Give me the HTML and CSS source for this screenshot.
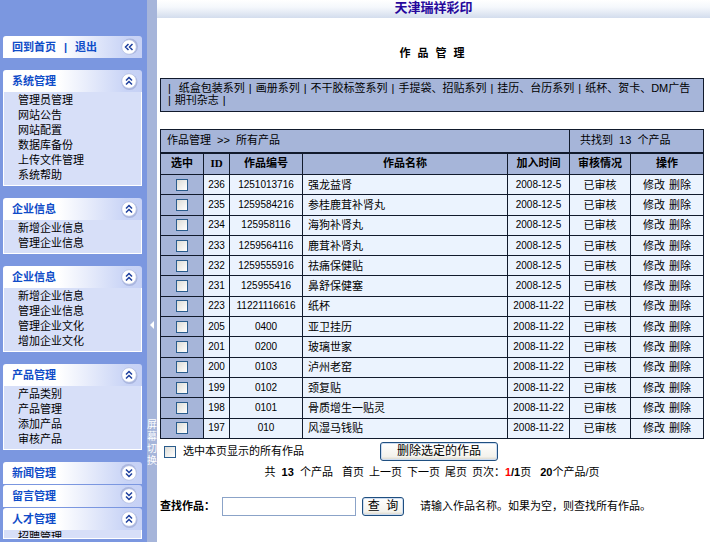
FILE: index.html
```html
<!DOCTYPE html>
<html lang="zh-CN">
<head>
<meta charset="utf-8">
<title>天津瑞祥彩印</title>
<link rel="stylesheet" href="styles.css">
</head>
<body>
<svg class="defs" aria-hidden="true">
  <symbol id="up" viewBox="0 0 18 18">
    <circle cx="9.5" cy="10" r="8" fill="#8f9ccb" opacity=".55"/>
    <circle cx="9" cy="9" r="7.3" fill="#fff" stroke="#b4bfe2" stroke-width=".8"/>
    <path d="M6 8.5 9 5.5 12 8.5M6 12.5 9 9.5 12 12.5" fill="none" stroke="#1d3f9e" stroke-width="1.5"/>
  </symbol>
</svg>
<div class="layout">
  <nav class="sidebar">
    <section class="panel">
      <div class="head"><span class="links"><a href="#">回到首页</a><span>|</span><a href="#">退出</a></span><button class="toggle left" aria-label="收起"><svg><use href="#up"/></svg></button></div>
    </section>
    <section class="panel">
      <div class="head"><h2>系统管理</h2><button class="toggle" aria-label="收起"><svg><use href="#up"/></svg></button></div>
      <ul><li><a href="#">管理员管理</a></li><li><a href="#">网站公告</a></li><li><a href="#">网站配置</a></li><li><a href="#">数据库备份</a></li><li><a href="#">上传文件管理</a></li><li><a href="#">系统帮助</a></li></ul>
    </section>
    <section class="panel">
      <div class="head"><h2>企业信息</h2><button class="toggle" aria-label="收起"><svg><use href="#up"/></svg></button></div>
      <ul><li><a href="#">新增企业信息</a></li><li><a href="#">管理企业信息</a></li></ul>
    </section>
    <section class="panel">
      <div class="head"><h2>企业信息</h2><button class="toggle" aria-label="收起"><svg><use href="#up"/></svg></button></div>
      <ul><li><a href="#">新增企业信息</a></li><li><a href="#">管理企业信息</a></li><li><a href="#">管理企业文化</a></li><li><a href="#">增加企业文化</a></li></ul>
    </section>
    <section class="panel">
      <div class="head"><h2>产品管理</h2><button class="toggle" aria-label="收起"><svg><use href="#up"/></svg></button></div>
      <ul><li><a href="#">产品类别</a></li><li><a href="#">产品管理</a></li><li><a href="#">添加产品</a></li><li><a href="#">审核产品</a></li></ul>
    </section>
    <div class="stack">
      <section class="panel">
        <div class="head"><h2>新闻管理</h2><button class="toggle down" aria-label="展开"><svg><use href="#up"/></svg></button></div>
      </section>
      <section class="panel">
        <div class="head"><h2>留言管理</h2><button class="toggle down" aria-label="展开"><svg><use href="#up"/></svg></button></div>
      </section>
      <section class="panel">
        <div class="head"><h2>人才管理</h2><button class="toggle" aria-label="收起"><svg><use href="#up"/></svg></button></div>
        <ul class="opening"><li><a href="#">招聘管理</a></li></ul>
      </section>
    </div>
  </nav>
  <button class="splitter"><i class="arrow"></i><span>屏幕切换</span></button>
  <main>
    <header class="banner">天津瑞祥彩印</header>
    <div class="content">
      <h1><span>作</span><span>品</span><span>管</span><span>理</span></h1>
      <nav class="series">
        <span>|</span><a class="first" href="#">纸盒包装系列</a><span>|</span><a href="#">画册系列</a><span>|</span><a href="#">不干胶标签系列</a><span>|</span><a href="#">手提袋、招贴系列</a><span>|</span><a href="#">挂历、台历系列</a><span>|</span><a href="#">纸杯、贺卡、DM广告</a><span>|</span><a href="#">期刊杂志</a><span>|</span>
      </nav>
      <table>
        <colgroup><col class="c-check"><col class="c-id"><col class="c-no"><col><col class="c-date"><col class="c-state"><col class="c-act"></colgroup>
        <thead>
          <tr class="summary"><td colspan="5">作品管理 &nbsp;&gt;&gt;&nbsp; 所有产品</td><td colspan="2" class="total">共找到 &nbsp;13&nbsp; 个产品</td></tr>
          <tr><th>选中</th><th class="latin">ID</th><th>作品编号</th><th>作品名称</th><th>加入时间</th><th>审核情况</th><th>操作</th></tr>
        </thead>
        <tbody>
          <tr><td><input type="checkbox" aria-label="236"></td><td>236</td><td>1251013716</td><td>强龙益肾</td><td>2008-12-5</td><td>已审核</td><td><a href="#">修改</a> <a href="#">删除</a></td></tr>
          <tr><td><input type="checkbox" aria-label="235"></td><td>235</td><td>1259584216</td><td>参桂鹿茸补肾丸</td><td>2008-12-5</td><td>已审核</td><td><a href="#">修改</a> <a href="#">删除</a></td></tr>
          <tr><td><input type="checkbox" aria-label="234"></td><td>234</td><td>125958116</td><td>海狗补肾丸</td><td>2008-12-5</td><td>已审核</td><td><a href="#">修改</a> <a href="#">删除</a></td></tr>
          <tr><td><input type="checkbox" aria-label="233"></td><td>233</td><td>1259564116</td><td>鹿茸补肾丸</td><td>2008-12-5</td><td>已审核</td><td><a href="#">修改</a> <a href="#">删除</a></td></tr>
          <tr><td><input type="checkbox" aria-label="232"></td><td>232</td><td>1259555916</td><td>祛痛保健贴</td><td>2008-12-5</td><td>已审核</td><td><a href="#">修改</a> <a href="#">删除</a></td></tr>
          <tr><td><input type="checkbox" aria-label="231"></td><td>231</td><td>125955416</td><td>鼻舒保健塞</td><td>2008-12-5</td><td>已审核</td><td><a href="#">修改</a> <a href="#">删除</a></td></tr>
          <tr><td><input type="checkbox" aria-label="223"></td><td>223</td><td>11221116616</td><td>纸杯</td><td>2008-11-22</td><td>已审核</td><td><a href="#">修改</a> <a href="#">删除</a></td></tr>
          <tr><td><input type="checkbox" aria-label="205"></td><td>205</td><td>0400</td><td>亚卫挂历</td><td>2008-11-22</td><td>已审核</td><td><a href="#">修改</a> <a href="#">删除</a></td></tr>
          <tr><td><input type="checkbox" aria-label="201"></td><td>201</td><td>0200</td><td>玻璃世家</td><td>2008-11-22</td><td>已审核</td><td><a href="#">修改</a> <a href="#">删除</a></td></tr>
          <tr><td><input type="checkbox" aria-label="200"></td><td>200</td><td>0103</td><td>泸州老窑</td><td>2008-11-22</td><td>已审核</td><td><a href="#">修改</a> <a href="#">删除</a></td></tr>
          <tr><td><input type="checkbox" aria-label="199"></td><td>199</td><td>0102</td><td>颈复贴</td><td>2008-11-22</td><td>已审核</td><td><a href="#">修改</a> <a href="#">删除</a></td></tr>
          <tr><td><input type="checkbox" aria-label="198"></td><td>198</td><td>0101</td><td>骨质增生一贴灵</td><td>2008-11-22</td><td>已审核</td><td><a href="#">修改</a> <a href="#">删除</a></td></tr>
          <tr><td><input type="checkbox" aria-label="197"></td><td>197</td><td>010</td><td>风湿马钱贴</td><td>2008-11-22</td><td>已审核</td><td><a href="#">修改</a> <a href="#">删除</a></td></tr>
        </tbody>
      </table>
      <div class="bulk">
        <label><input type="checkbox">选中本页显示的所有作品</label>
        <button class="btn wide">删除选定的作品</button>
      </div>
      <div class="pager">
        <span>共 &nbsp;<b>13</b>&nbsp; 个产品</span>
        <span class="steps"><a href="#">首页</a><a href="#">上一页</a><a href="#">下一页</a><a href="#">尾页</a><span>页次：<b><em>1</em>/1</b>页</span></span>
        <span><b>20</b>个产品/页</span>
      </div>
      <form class="search">
        <label for="q">查找作品：</label>
        <input id="q" type="text">
        <button type="button" class="btn">查&nbsp; 询</button>
        <span>请输入作品名称。如果为空，则查找所有作品。</span>
      </form>
    </div>
  </main>
</div>
</body>
</html>
```
FILE: styles.css
```css
* { box-sizing: border-box; }
html, body { height: 100%; }
body {
  margin: 0;
  font: 11px/15px "Liberation Sans", "Noto Sans CJK SC", sans-serif;
  color: #000;
  background: #fff;
  overflow: hidden;
}
a { color: inherit; text-decoration: none; }
button, input { font: inherit; color: inherit; margin: 0; }
.defs { position: absolute; width: 0; height: 0; }
.layout { display: flex; min-height: 100vh; }

.sidebar {
  flex: 0 0 147px;
  display: flex;
  flex-direction: column;
  gap: 12px;
  padding: 36px 5px 0 3px;
  background: #7b97e0;
}
.stack { display: flex; flex-direction: column; gap: 1px; }
.head {
  display: flex;
  align-items: center;
  justify-content: space-between;
  height: 22px;
  padding: 0 4px 0 9px;
  border-radius: 3px 3px 0 0;
  background: linear-gradient(90deg, #fff 0%, #fff 40%, #c9d4f6 88%, #c6d1f5 100%);
  color: #0f4cc8;
  font-weight: bold;
}
.head h2 { margin: 0; font-size: 11px; }
.links { display: flex; gap: 8px; }
.toggle { width: 18px; height: 18px; padding: 0; border: 0; background: none; }
.toggle svg { display: block; width: 18px; height: 18px; }
.toggle.left svg { transform: rotate(-90deg); }
.toggle.down svg { transform: rotate(180deg); }
.panel ul {
  list-style: none;
  margin: 0;
  padding: 1px 0 2px 14px;
  border: 1px solid #fff;
  border-top: 0;
  background: #d7dff8;
}
.panel ul.opening { height: 9px; padding: 0 0 0 14px; overflow: hidden; }

.splitter {
  flex: 0 0 10px;
  display: flex;
  flex-direction: column;
  align-items: center;
  justify-content: flex-start;
  gap: 90px;
  padding: 321px 0 0;
  border: 0;
  background: #a6b5da;
  color: #fff;
  font-size: 10px;
  line-height: 12px;
}
.splitter span { width: 10px; word-break: break-all; }
.arrow { border: solid transparent; border-width: 4px 4px 4px 0; border-right-color: #fff; }

main { flex: 1; min-width: 0; }
.banner {
  height: 18px;
  background: linear-gradient(#fff, #f5f8fc 40%, #d3dded);
  color: #26089c;
  font-size: 13px;
  line-height: 16px;
  font-weight: bold;
  text-align: center;
}
.content { padding: 28px 6px 0 3px; }
h1 { display: flex; justify-content: center; gap: 7px; margin: 0 0 17px; font-size: 11px; }
.series {
  display: flex;
  flex-wrap: wrap;
  align-content: flex-start;
  column-gap: 4px;
  min-height: 34px;
  padding: 3px 10px 5px 7px;
  border: 1px solid #111a2c;
  background: #a6b5d9;
  line-height: 12px;
}
.series .first { padding-left: 4px; }

table {
  width: 100%;
  height: 310px;
  margin-top: 17px;
  border-collapse: collapse;
  table-layout: fixed;
}
td, th {
  height: 20px;
  padding: 0;
  border: 1px solid #111a2c;
  text-align: center;
  line-height: 14px;
  white-space: nowrap;
}
.c-check { width: 43px; }
.c-id { width: 26px; }
.c-no { width: 73px; }
.c-date { width: 62px; }
.c-state { width: 61px; }
.c-act { width: 73px; }
thead td, thead th { height: 22px; background: #a6b5d9; }
thead th { padding-bottom: 2px; }
.latin { font-family: "Liberation Serif", serif; }
.summary td { height: 23px; padding: 0 0 2px 6px; text-align: left; border-bottom-width: 2px; }
.summary .total { padding-left: 10px; }
tbody td { background: #ebf3fe; }
tbody td:first-child { background: #a6b5d9; }
tbody td:nth-child(2), tbody td:nth-child(3), tbody td:nth-child(5) { font-size: 10px; }
tbody td:nth-child(4) { padding-left: 5px; text-align: left; }
tbody a + a { margin-left: 1px; }
input[type="checkbox"] {
  appearance: none;
  display: block;
  width: 12px;
  height: 12px;
  margin: 0 auto;
  border: 1px solid #2a5c8c;
  background: linear-gradient(135deg, #dcdcd7, #fff);
}

.bulk { display: flex; align-items: center; gap: 76px; padding: 3px 0 0 4px; }
.bulk label { display: flex; align-items: center; gap: 7px; }
.btn {
  height: 19px;
  padding: 0;
  border: 1px solid #1f4f80;
  border-radius: 3px;
  background: linear-gradient(#fff, #f3f2ec 80%, #d8d4c8);
  box-shadow: inset 0 0 0 1px #cddcf0;
  font-size: 12px;
  line-height: 15px;
  white-space: nowrap;
}
.btn.wide { width: 118px; }
.pager { display: flex; justify-content: center; gap: 9px; padding-top: 4px; }
.steps { display: flex; gap: 5px; }
.pager em { color: #f00; font-style: normal; }
.search { display: flex; align-items: center; margin-top: 17px; }
.search label { font-weight: bold; width: 62px; white-space: nowrap; }
.search input {
  width: 134px;
  height: 19px;
  margin-right: 6px;
  border: 1px solid #8ba3c8;
  background: #fff;
}
.search .btn { width: 42px; }
.search span { margin-left: 16px; white-space: nowrap; }
```
